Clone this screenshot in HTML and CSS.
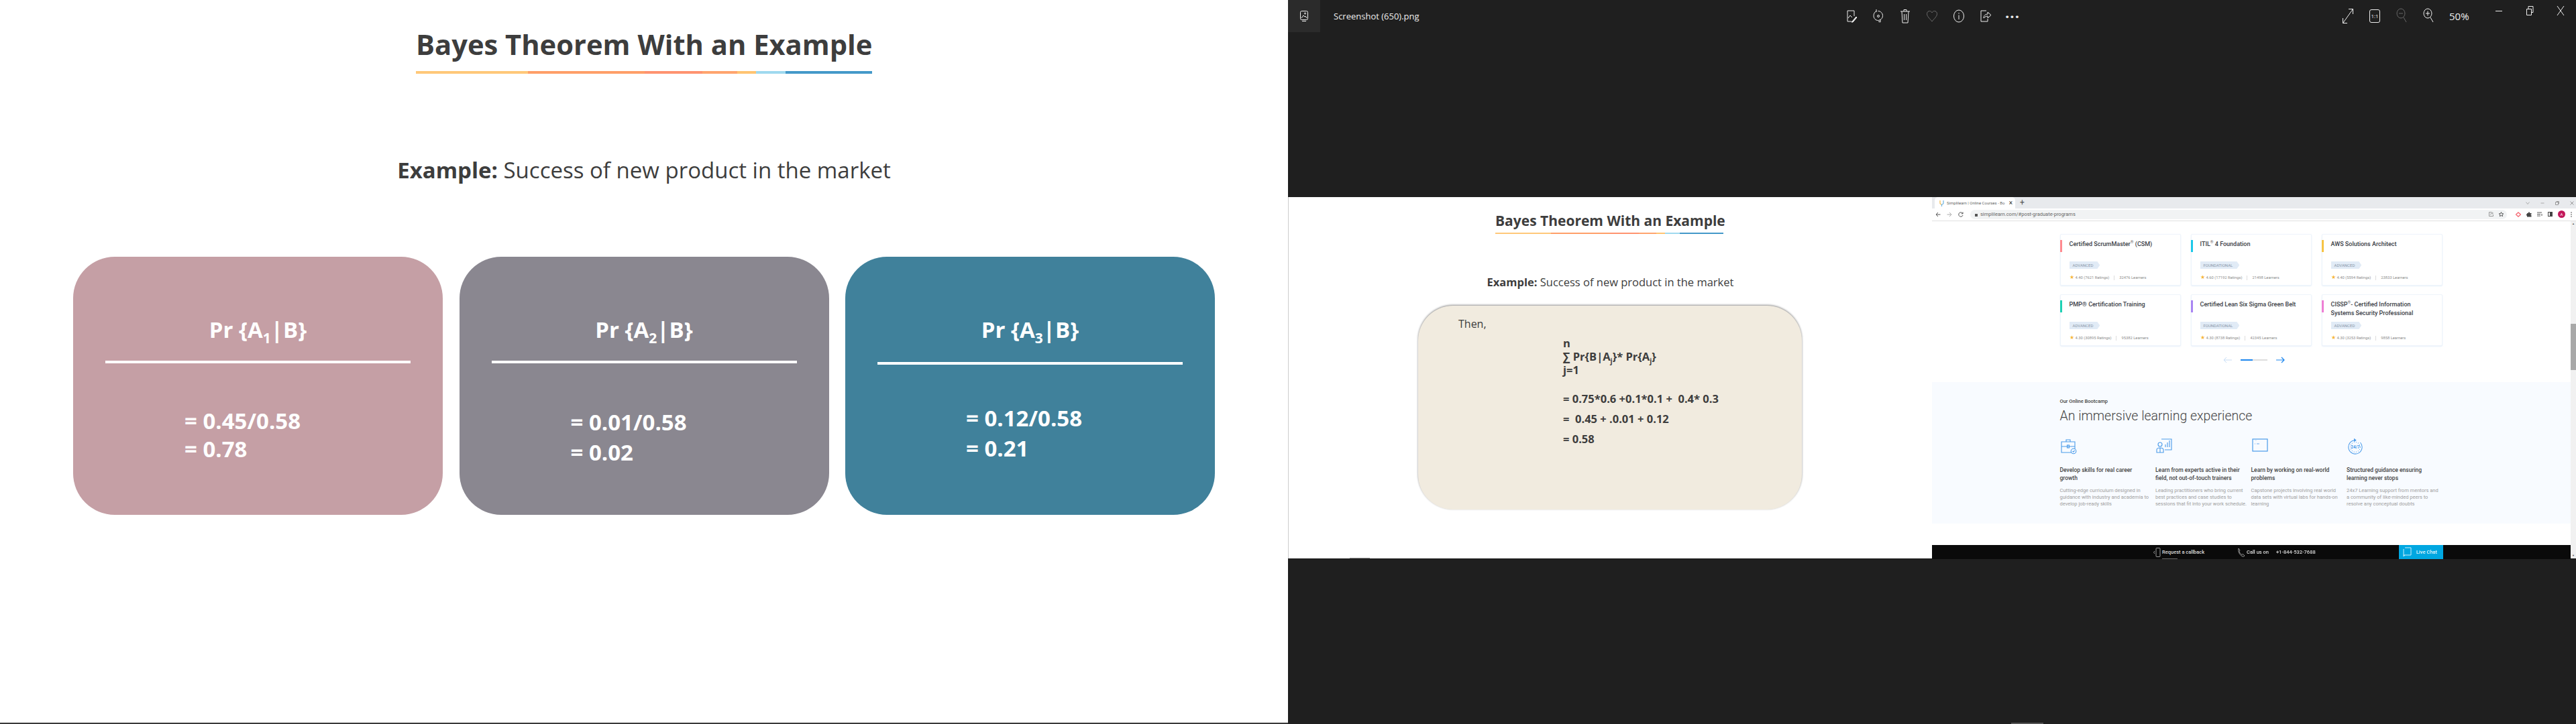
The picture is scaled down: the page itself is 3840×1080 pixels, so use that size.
FILE: index.html
```html
<!DOCTYPE html>
<html lang="en">
<head>
  <meta charset="UTF-8">
  <title>Screenshot (650).png</title>
  <link rel="stylesheet" href="styles.css">
</head>
<body>
  <section class="slide">
    <div class="heading">
      <h1>Bayes Theorem With an Example</h1>
      <div class="rule"></div>
    </div>
    <p class="lead"><b>Example:</b> Success of new product in the market</p>
    <div class="cards">
      <div class="card card-rose">
        <h2>Pr {A<sub>1</sub>|B}</h2>
        <hr>
        <p>= 0.45/0.58<br>= 0.78</p>
      </div>
      <div class="card card-grey">
        <h2>Pr {A<sub>2</sub>|B}</h2>
        <hr>
        <p>= 0.01/0.58<br>= 0.02</p>
      </div>
      <div class="card card-teal">
        <h2>Pr {A<sub>3</sub>|B}</h2>
        <hr>
        <p>= 0.12/0.58<br>= 0.21</p>
      </div>
    </div>
  </section>

  <section class="viewer">
    <header class="viewer-bar">
      <div class="app-btn">
        <svg width="14" height="18" viewBox="0 0 14 18" fill="none" stroke="#eee"><rect x="1.5" y="1.5" width="11" height="13" rx="2"/><path d="M3 12l3-4 2 2 1-1 2 3M4 16.5h6"/><circle cx="8.5" cy="5" r="1"/></svg>
      </div>
      <div class="file-name">Screenshot (650).png</div>
      <div class="tools">
        <button><svg width="18" height="20" viewBox="0 0 18 20" fill="none" stroke="#eee"><path d="M9 18H3V2h10v8"/><path d="M4 13l3-4 3 3"/><path d="M10 18l6-7 1 1-6 7-2 0z" fill="#eee"/></svg></button>
        <button><svg width="16" height="20" viewBox="0 0 16 20" fill="none" stroke="#eee"><path d="M5 2.5C2.500 4 1 6.500 1 9.500c0 3.800 3 7 6.500 7s7-3.200 7-7-3-7-7-7"/><path d="M5 0v4h0M11 15v4l-3-1"/><circle cx="8" cy="10" r="1.500"/></svg></button>
        <button><svg width="16" height="22" viewBox="0 0 16 22" fill="none" stroke="#eee"><path d="M1 4h14M6 4V1.500h4V4M3 4l1 17h8l1-17M6.500 8v9M9.500 8v9"/></svg></button>
        <button><svg width="18" height="18" viewBox="0 0 18 18" fill="none" stroke="#6b6b6b"><path d="M9 17C5 12 1.500 9.500 1.500 5.500 1.500 3 3.500 1.500 5.500 1.500 7 1.500 8.300 2.300 9 4c.7-1.700 2-2.500 3.500-2.500 2 0 4 1.500 4 4 0 4-3.500 6.500-7.500 11.500z"/></svg></button>
        <button><svg width="18" height="20" viewBox="0 0 18 20" fill="none" stroke="#eee"><ellipse cx="9" cy="10" rx="7.500" ry="9"/><path d="M9 8.500V15M9 5v1.500"/></svg></button>
        <button><svg width="18" height="20" viewBox="0 0 18 20" fill="none" stroke="#eee"><path d="M10 2H2v16h10v-4"/><path d="M6 13c0-4 3-6 6-6V4l5 4.500L12 13v-3c-2 0-4 1-6 3z"/></svg></button>
        <button class="dots">&middot;&middot;&middot;</button>
      </div>
      <div></div>
      <div class="tools">
        <button><svg width="18" height="24" viewBox="0 0 18 24" fill="none" stroke="#eee"><path d="M1.500 22.500L16.500 1.500M10 1.500h6.500V9M1.500 15v7.500H8"/></svg></button>
        <button><div class="one-to-one">1:1</div></button>
        <button><svg width="16" height="24" viewBox="0 0 16 24" fill="none" stroke="#666"><ellipse cx="7" cy="8" rx="6" ry="7"/><path d="M4 8h6M11 14l4 7"/></svg></button>
        <button><svg width="16" height="24" viewBox="0 0 16 24" fill="none" stroke="#eee"><ellipse cx="7" cy="8" rx="6" ry="7"/><path d="M4 8h6M7 4.500v7M11 14l4 7"/></svg></button>
      </div>
      <div class="zoom-level">50%</div>
      <div class="win-btns">
        <button><svg width="12" height="12" viewBox="0 0 12 12" stroke="#eee"><path d="M1 6.500h10"/></svg></button>
        <button><svg width="12" height="16" viewBox="0 0 12 16" fill="none" stroke="#eee"><path d="M1.500 5.500h7v9h-7zM4 5V1.500h7v9H8.500"/></svg></button>
        <button><svg width="12" height="16" viewBox="0 0 12 16" stroke="#eee"><path d="M1 1l10 14M11 1L1 15"/></svg></button>
      </div>
    </header>

    <div class="shot">
      <div class="mini-slide">
        <div class="mini-heading">
          <h3>Bayes Theorem With an Example</h3>
          <div class="rule"></div>
        </div>
        <p class="mini-lead"><b>Example:</b> Success of new product in the market</p>
        <div class="note">
          <p class="then">Then,</p>
          <div class="math">
            <div class="sum">n<br>&sum; Pr{B|A<sub>j</sub>}* Pr{A<sub>j</sub>}<br>j=1</div>
            <div class="steps">= 0.75*0.6 +0.1*0.1 +  0.4* 0.3
=  0.45 + .0.01 + 0.12
= 0.58</div>
          </div>
        </div>
      </div>

      <div class="browser">
        <div class="tabstrip">
          <div class="tab">
            <svg width="7" height="10" viewBox="0 0 7 10" fill="none" stroke-width="1.200"><path d="M1 1v4c0 1 1 2 2.500 2" stroke="#f5b94a"/><path d="M6 1v4c0 1-1 2-2.500 2v3" stroke="#6cb3e0"/></svg>
            <span class="tab-title">Simplilearn | Online Courses - Bo</span>
            <span class="tab-x">&times;</span>
          </div>
          <span class="tab-plus">+</span>
          <div class="win-mini">
            <svg width="6" height="6" viewBox="0 0 6 6" fill="none" stroke="#aaa"><path d="M0.500 1.500L3 4.500l2.500-3"/></svg>
            <svg width="6" height="6" viewBox="0 0 6 6" stroke="#aaa"><path d="M0.500 3h5"/></svg>
            <svg width="6" height="6" viewBox="0 0 6 6" fill="none" stroke="#999"><path d="M0.500 1.500h4v4h-4zM2 1V0.500h3.500V4"/></svg>
            <svg width="6" height="6" viewBox="0 0 6 6" stroke="#999"><path d="M0.500 0.500l5 5M5.500 0.500l-5 5"/></svg>
          </div>
        </div>
        <div class="omnibar">
          <svg class="nav" width="8" height="8" viewBox="0 0 8 8" fill="none" stroke="#555"><path d="M7.500 4H1M4 1L1 4l3 3"/></svg>
          <svg class="nav" width="8" height="8" viewBox="0 0 8 8" fill="none" stroke="#aaa"><path d="M0.500 4H7M4 1l3 3-3 3"/></svg>
          <svg class="nav" width="8" height="8" viewBox="0 0 8 8" fill="none" stroke="#555"><path d="M6.800 2.500A3.200 3.200 0 1 0 7 5M7 0.500v2.300H4.800"/></svg>
          <div class="address">
            <svg width="4" height="6" viewBox="0 0 4 6" fill="#555"><rect y="2" width="4" height="4"/></svg>
            <span class="url">simplilearn.com/#post-graduate-programs</span>
            <svg class="addr-share" width="7" height="7" viewBox="0 0 7 7" fill="none" stroke="#999"><path d="M4 0.500h-3.500v6h6V4M2.500 4.500c0-2 1-2.500 2.500-2.500M4.500 0.500l2 1.500-2 1.500"/></svg>
            <svg width="7" height="7" viewBox="0 0 7 7" fill="none" stroke="#555"><path d="M3.500 0.500l1 2.100 2.300 0.300-1.700 1.500 0.500 2.200-2.100-1.100-2.100 1.100 0.500-2.200L0.200 2.900l2.300-0.300z"/></svg>
          </div>
          <svg width="8" height="8" viewBox="0 0 8 8" fill="none" stroke="#f56b76" stroke-width="1.500"><path d="M0.500 4L4 1l3.500 3L4 7z"/></svg>
          <svg width="8" height="8" viewBox="0 0 8 8" fill="#444"><path d="M3 0.500h2v1.500h2.500v2H6.500v1H7.500v2.500H1V5.500H0v-2h1V2h2z"/></svg>
          <svg width="8" height="7" viewBox="0 0 8 7" stroke="#555" fill="none"><path d="M0 1h7M0 3.500h5M0 6h5M7 3v3"/></svg>
          <svg width="7" height="7" viewBox="0 0 7 7" fill="none" stroke="#444"><rect x="0.500" y="0.500" width="6" height="6"/><rect x="3.500" y="0.500" width="3" height="6" fill="#444"/></svg>
          <span class="avatar">A</span>
          <svg width="2" height="8" viewBox="0 0 2 8" fill="#444"><circle cx="1" cy="1" r="0.800"/><circle cx="1" cy="4" r="0.800"/><circle cx="1" cy="7" r="0.800"/></svg>
        </div>
        <div class="page">
          <div class="page-main">
            <div class="courses">
              <article class="course accent-pink">
                <h4>Certified ScrumMaster<sup>&reg;</sup> (CSM)</h4>
                <span class="level">ADVANCED</span>
                <div class="stats"><i class="star">&#9733;</i>4.40 (7621 Ratings)<i class="sep"></i>32476 Learners</div>
              </article>
              <article class="course accent-cyan">
                <h4>ITIL<sup>&reg;</sup> 4 Foundation</h4>
                <span class="level">FOUNDATIONAL</span>
                <div class="stats"><i class="star">&#9733;</i>4.60 (17192 Ratings)<i class="sep"></i>21498 Learners</div>
              </article>
              <article class="course accent-amber">
                <h4>AWS Solutions Architect</h4>
                <span class="level">ADVANCED</span>
                <div class="stats"><i class="star">&#9733;</i>4.40 (5594 Ratings)<i class="sep"></i>23833 Learners</div>
              </article>
              <article class="course accent-green">
                <h4>PMP&reg; Certification Training</h4>
                <span class="level">ADVANCED</span>
                <div class="stats"><i class="star">&#9733;</i>4.30 (30895 Ratings)<i class="sep"></i>95382 Learners</div>
              </article>
              <article class="course accent-violet">
                <h4>Certified Lean Six Sigma Green Belt</h4>
                <span class="level">FOUNDATIONAL</span>
                <div class="stats"><i class="star">&#9733;</i>4.30 (8738 Ratings)<i class="sep"></i>42345 Learners</div>
              </article>
              <article class="course accent-magenta">
                <h4>CISSP<sup>&reg;</sup>- Certified Information<br>Systems Security Professional</h4>
                <span class="level">ADVANCED</span>
                <div class="stats"><i class="star">&#9733;</i>4.30 (3253 Ratings)<i class="sep"></i>9858 Learners</div>
              </article>
            </div>
            <div class="pager">
              <svg width="13" height="10" viewBox="0 0 13 10" fill="none" stroke="#c6dcf5"><path d="M13 5H1M5 1L1 5l4 4"/></svg>
              <div class="pager-track"><div class="pager-fill"></div></div>
              <svg width="13" height="10" viewBox="0 0 13 10" fill="none" stroke="#1c86ee" stroke-width="1.200"><path d="M0 5h12M8 1l4 4-4 4"/></svg>
            </div>
            <div class="bootcamp">
              <div class="eyebrow">Our Online Bootcamp</div>
              <div class="boot-title">An immersive learning experience</div>
              <div class="features">
                <div class="feature">
                  <svg width="24" height="24" viewBox="0 0 24 24" fill="none" stroke="#4a9bea" stroke-width="1.100"><path d="M1 5h20v16H1zM1 12h20M8 5V2h6v3"/><rect x="9.500" y="10" width="3" height="4"/><circle cx="19" cy="19" r="3.800" fill="#f8fbff"/><path d="M17.500 19l1.200 1.200 2-2.400"/></svg>
                  <h5>Develop skills for real career<br>growth</h5>
                  <p>Cutting-edge curriculum designed in<br>guidance with industry and academia to<br>develop job-ready skills</p>
                </div>
                <div class="feature">
                  <svg width="24" height="24" viewBox="0 0 24 24" fill="none" stroke="#4a9bea" stroke-width="1.100"><path d="M8 1h15v16H13"/><path d="M14 13V9M17 13V6M20 13V3"/><circle cx="6" cy="9" r="3"/><path d="M1 21v-4c0-2 2-3 5-3s5 1 5 3v4zM6 14v7"/></svg>
                  <h5>Learn from experts active in their<br>field, not out-of-touch trainers</h5>
                  <p>Leading practitioners who bring current<br>best practices and case studies to<br>sessions that fit into your work schedule.</p>
                </div>
                <div class="feature">
                  <svg width="24" height="24" viewBox="0 0 24 24" fill="none" stroke="#4a9bea" stroke-width="1.200"><rect x="1" y="1" width="22" height="18"/><path d="M4 8h1M7 8h4" stroke-width="0.800"/><path d="M4 3h3" stroke="#b6d4f3" stroke-width="0.600"/></svg>
                  <h5>Learn by working on real-world<br>problems</h5>
                  <p>Capstone projects involving real world<br>data sets with virtual labs for hands-on<br>learning</p>
                </div>
                <div class="feature">
                  <svg width="24" height="26" viewBox="0 0 24 26" fill="none" stroke="#4a9bea" stroke-width="1.100"><path d="M12 3a11 11 0 1 0 8 3.500"/><path d="M10 0.500l3 2.500-3 2" fill="#4a9bea"/><circle cx="12" cy="14" r="8" stroke-dasharray="1 2.500"/><text x="12" y="16.500" font-size="7" font-family="Roboto" font-weight="700" fill="#4a9bea" stroke="none" text-anchor="middle">24/7</text></svg>
                  <h5>Structured guidance ensuring<br>learning never stops</h5>
                  <p>24x7 Learning support from mentors and<br>a community of like-minded peers to<br>resolve any conceptual doubts</p>
                </div>
              </div>
            </div>
            <div class="callbar">
              <div class="call-item callback">
                <svg width="11" height="14" viewBox="0 0 11 14" fill="none" stroke="#bbb" stroke-width="0.800"><rect x="4" y="0.500" width="6" height="13" rx="1"/><path d="M2 5L0.500 7 2 9"/></svg>
                Request a callback
              </div>
              <div class="call-item phone">
                <svg width="12" height="14" viewBox="0 0 12 14" fill="none" stroke="#bbb" stroke-width="0.800"><path d="M2 1l2 3-1 1.500c.5 2 2 4 4 5L8.500 9.500l2.500 2.500c-1 1.500-2.500 1.500-4 .5C3.500 10.500 1 6 2 1z"/></svg>
                Call us on
                <span class="phone-no">+1-844-532-7688</span>
              </div>
              <div class="live-chat">
                <svg width="14" height="15" viewBox="0 0 14 15" fill="none" stroke="#cdeefa"><path d="M4 1h9v11H2V3M2 12v2l2-2"/></svg>
                Live Chat
              </div>
            </div>
          </div>
          <div class="scrollbar">
            <span class="arrow">&#9650;</span>
            <div class="thumb"></div>
            <span class="arrow">&#9660;</span>
          </div>
        </div>
      </div>
    </div>
  </section>
</body>
</html>
```

FILE: styles.css
```css
* { box-sizing: border-box; }
html, body { margin: 0; padding: 0; }
body { display: flex; width: 3840px; height: 1080px; overflow: hidden; font-family: "Open Sans", sans-serif; color: #3d3d3d; background: #fff; }
p, h1, h2, h3, h4, h5 { margin: 0; }
button { display: flex; align-items: center; justify-content: center; padding: 0; border: none; background: none; color: #eee; font-family: inherit; }

.rule { background: linear-gradient(90deg, #ffc879 0 24.5%, #ff9f68 24.5% 50.2%, #ff9370 50.2% 62.8%, #ffa46e 62.8% 70.5%, #ffc472 70.5% 74.5%, #9fd9ef 74.5% 81%, #4499c9 81% 100%); }

/* left slide */
.slide { width: 1920px; height: 1080px; border-bottom: 2px solid #3a3a3a; }
.heading { width: 680px; margin: 0 auto; padding-top: 41px; }
.heading h1 { font-size: 41.700px; line-height: 50px; font-weight: 700; text-align: center; white-space: nowrap; }
.heading .rule { height: 4px; margin-top: 15px; }
.lead { margin-top: 124px; font-size: 33px; line-height: 40px; text-align: center; }
.cards { display: flex; gap: 24.5px; margin-top: 109px; padding: 0 109px; }
.card { flex: 1; height: 385px; border-radius: 62px; padding-top: 87px; color: #fff; font-weight: 700; }
.card h2 { font-size: 33px; line-height: 44px; font-weight: 700; text-align: center; }
.card sub { font-size: 21px; line-height: 0; }
.card hr { height: 4px; margin: 24px 48px 0; border: none; background: #fff; }
.card p { margin-top: 65px; padding-left: 166px; font-size: 33px; line-height: 42px; }
.card-rose { background: #c59fa5; }
.card-grey { background: #8a8790; }
.card-grey p { line-height: 45px; }
.card-teal { background: #40819b; }
.card-teal hr { margin-top: 26px; }
.card-teal p { margin-top: 57px; padding-left: 180px; line-height: 45px; }

/* photo viewer */
.viewer { position: relative; width: 1920px; height: 1080px; background: #1f1f1f; color: #eee; }
.viewer::after { content: ""; position: absolute; left: 1078px; bottom: 0; width: 48px; height: 2px; background: #555; }
.viewer-bar { display: grid; grid-template-columns: 48px 772px 280px 460px 160px 62px 138px; height: 48px; align-items: center; }
.app-btn { display: flex; align-items: center; justify-content: center; height: 48px; background: #2b2b2b; }
.file-name { padding-left: 20px; font-size: 13px; white-space: nowrap; }
.tools { display: flex; }
.tools button { width: 40px; height: 48px; }
.tools .dots { font-size: 22px; font-weight: 700; letter-spacing: 1px; }
.one-to-one { width: 16px; height: 20px; border: 1px solid #eee; border-radius: 3px; font-size: 8px; line-height: 18px; text-align: center; }
.zoom-level { padding-left: 11px; font-size: 15px; }
.win-btns { display: flex; align-self: start; }
.win-btns button { width: 46px; height: 32px; }

.shot { display: flex; width: 1920px; height: 539px; margin-top: 246px; background: #fff; color: #3d3d3d; filter: blur(.3px); }

/* slide inside the screenshot */
.mini-slide { position: relative; width: 960px; border-left: 1px solid #ccc; }
.mini-slide::after { content: ""; position: absolute; left: 91px; bottom: 0; width: 30px; height: 1px; background: #999; }
.mini-heading { width: 340px; margin-left: 308px; padding-top: 20px; }
.mini-heading h3 { font-size: 21px; line-height: 30px; font-weight: 700; text-align: center; white-space: nowrap; }
.mini-heading .rule { height: 2px; margin-top: 3px; }
.mini-lead { margin-top: 60px; font-size: 16.500px; line-height: 24px; text-align: center; }
.note { width: 572px; height: 304px; margin: 23px 0 0 193px; padding: 15px 0 0 60px; border-radius: 52px; background: #f1ebdf; box-shadow: 0 -1px 3px rgba(0,0,0,.45); }
.then { font-size: 16px; line-height: 24px; }
.math { margin: 7px 0 0 156px; font-size: 16.500px; font-weight: 700; }
.sum { line-height: 20px; }
.sum sub { font-size: 10px; line-height: 0; }
.steps { margin-top: 18px; line-height: 30px; white-space: pre; }

/* browser inside the screenshot */
.browser { display: flex; flex-direction: column; width: 960px; font-family: Roboto, sans-serif; }
.tabstrip { display: flex; align-items: flex-end; height: 17px; padding-left: 4px; background: #e8eaed; }
.tab { display: flex; align-items: center; gap: 4px; width: 120px; height: 17px; padding: 0 4px 0 7px; border-radius: 5px 5px 0 0; background: #fff; }
.tab-title { flex: 1; font-size: 6px; color: #666; white-space: nowrap; }
.tab-x { font-size: 10px; line-height: 10px; color: #333; }
.tab-plus { margin-left: 7px; font-size: 12px; line-height: 17px; color: #555; }
.win-mini { display: flex; gap: 16px; align-self: center; margin-left: auto; padding-right: 3px; }
.omnibar { display: flex; align-items: center; gap: 8px; height: 19px; padding: 0 6px 1px 4px; border-bottom: 1px solid #e0e0e0; background: #fff; }
.omnibar .nav { margin: 0 0 0 1px; }
.address { display: flex; align-items: center; gap: 4px; flex: 1; height: 14px; margin: 0 5px 0 2px; padding: 0 5px 0 7px; border-radius: 7px; background: #f1f3f4; }
.url { flex: 1; font-size: 7.500px; color: #666; }
.addr-share { margin-right: 4px; }
.avatar { width: 11px; height: 11px; border-radius: 50%; background: #c2185b; color: #fff; font-size: 6px; line-height: 11px; text-align: center; }
.page { display: flex; height: 503px; }
.page-main { width: 952px; }
.courses { display: grid; grid-template-columns: repeat(3, 179.500px); grid-auto-rows: 77px; column-gap: 15.500px; row-gap: 13px; padding: 19px 0 0 191px; }
.course { position: relative; padding: 8px 0 0 12.500px; border: 1px solid #eef4fb; border-radius: 2px; background: #fff; box-shadow: 0 1px 2px rgba(120,170,230,.18); }
.course::before { content: ""; position: absolute; left: -1px; top: 8px; width: 3px; height: 18px; }
.accent-pink::before { background: #ff8a8f; }
.accent-cyan::before { background: #1cc8e8; }
.accent-amber::before { background: #f6c344; }
.accent-green::before { background: #1fd1b4; }
.accent-violet::before { background: #a985f2; }
.accent-magenta::before { background: #ee7fd4; }
.course h4 { height: 32px; font-size: 9px; line-height: 13px; font-weight: 500; color: #3a3d45; white-space: nowrap; }
.course sup { font-size: 6px; line-height: 0; font-weight: 400; color: #666; }
.level { display: block; width: fit-content; height: 11px; padding: 0 10px 0 5px; background: #e1ebf6; clip-path: polygon(0 0, calc(100% - 4px) 0, 100% 50%, calc(100% - 4px) 100%, 0 100%); font-size: 6px; line-height: 11px; color: #8a97a8; }
.stats { display: flex; align-items: center; margin-top: 9px; font-size: 5.800px; line-height: 8px; color: #8d8d8d; white-space: nowrap; }
.star { margin-right: 2px; font-size: 8px; font-style: normal; line-height: 8px; color: #f6b73c; }
.sep { width: 1px; height: 7px; margin: 0 7px; background: #ddd; }
.pager { display: flex; align-items: center; gap: 13px; height: 12px; margin: 15px 0 27px 434px; }
.pager-track { width: 40px; height: 2px; background: #ddd; }
.pager-fill { width: 18px; height: 2px; background: #1c86ee; }
.bootcamp { height: 211px; padding: 24px 0 0 190.500px; background: #f8fbff; }
.eyebrow { font-size: 7.500px; line-height: 10px; font-weight: 500; color: #444; }
.boot-title { margin-top: 4px; font-size: 19.500px; line-height: 26px; font-weight: 300; color: #444; white-space: nowrap; }
.features { display: flex; margin-top: 20px; }
.feature { width: 142.500px; }
.feature svg { display: block; height: 24px; margin-left: 1px; }
.feature h5 { margin-top: 17px; font-size: 8.500px; line-height: 12px; font-weight: 500; color: #444; white-space: nowrap; }
.feature p { margin-top: 8px; font-size: 7.500px; line-height: 10px; color: #a0a0a0; white-space: nowrap; }
.callbar { position: relative; display: flex; align-items: center; height: 21px; margin-top: 32px; background: #0a0a0a; color: #ddd; font-size: 7.500px; font-weight: 500; }
.callbar::after { content: ""; position: absolute; left: 343px; bottom: 0; width: 23px; height: 1px; background: #666; }
.call-item { display: flex; align-items: center; gap: 2px; }
.callback { margin-left: 330px; width: 125px; }
.phone { width: 241px; }
.phone-no { margin-left: 9px; }
.live-chat { display: flex; align-items: center; gap: 7px; width: 66px; height: 21px; padding-left: 5px; background: #00a7e1; color: #e6f7fd; }
.scrollbar { display: flex; flex-direction: column; width: 8px; background: #f1f1f1; }
.arrow { height: 8px; font-size: 4px; line-height: 8px; text-align: center; color: #505050; }
.thumb { width: 8px; height: 69px; margin: 145px 0 auto; background: #a8a8a8; }
```
